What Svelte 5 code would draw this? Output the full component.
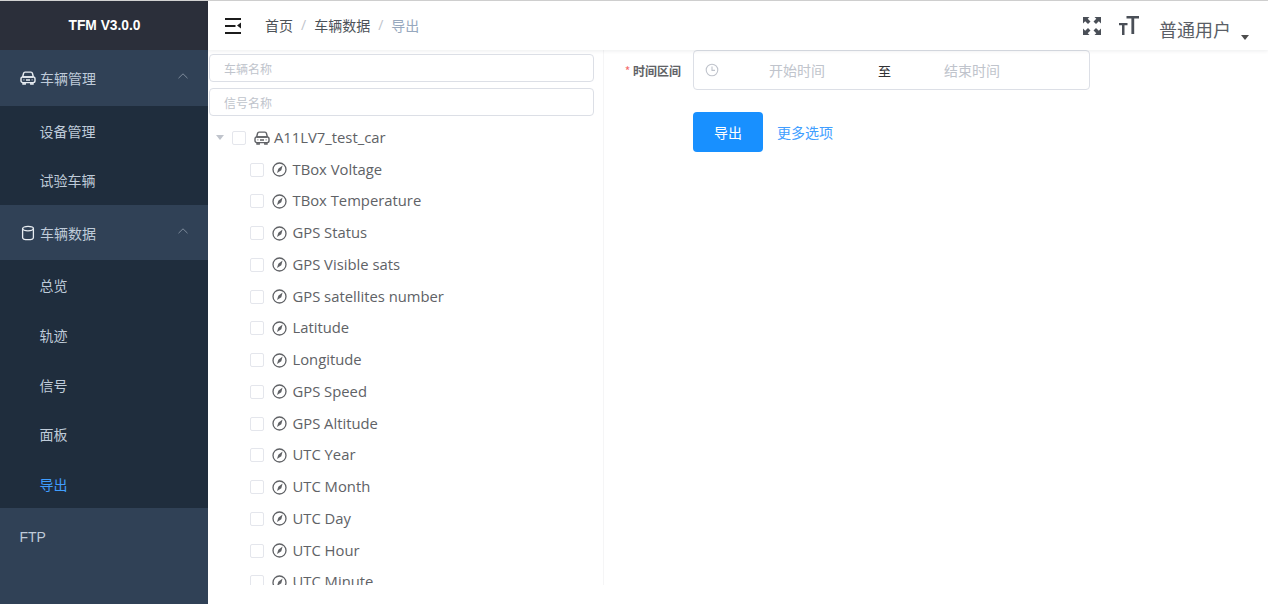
<script>
  const signals = [
    'TBox Voltage', 'TBox Temperature', 'GPS Status', 'GPS Visible sats', 'GPS satellites number',
    'Latitude', 'Longitude', 'GPS Speed', 'GPS Altitude', 'UTC Year', 'UTC Month', 'UTC Day', 'UTC Hour', 'UTC Minute'
  ];
  const menu = [
    { title: '车辆管理', icon: 'car', items: ['设备管理', '试验车辆'] },
    { title: '车辆数据', icon: 'db', items: ['总览', '轨迹', '信号', '面板', '导出'] }
  ];
</script>

{#snippet car(size)}
  <svg class="car" width={size} height={size} viewBox="0 0 16 16" fill="none" stroke="currentColor" stroke-width="1.4">
    <path d="M2.600 7 3.600 3.200C3.800 2.500 4.300 2.100 5 2.100h6c.7 0 1.200.4 1.400 1.100L13.400 7" />
    <rect x="1" y="7" width="14" height="5.600" rx="1.800" />
    <path d="M3 12.600v1.400h2.200v-1.400M10.800 12.600v1.400H13v-1.400M6 10h4M3 7h10" />
    <circle cx="3.900" cy="9.800" r=".6" fill="currentColor" stroke="none" />
    <circle cx="12.100" cy="9.800" r=".6" fill="currentColor" stroke="none" />
  </svg>
{/snippet}

{#snippet gauge()}
  <svg class="gauge" width="15" height="15" viewBox="0 0 15 15" fill="none" stroke="currentColor">
    <circle cx="7.500" cy="7.500" r="6.500" stroke-width="1.300" />
    <path d="M5 11 6.300 6.800 10.600 3.400 9.300 8.300z" fill="currentColor" stroke="none" />
  </svg>
{/snippet}

<div class="layout">
  <aside class="sidebar">
    <div class="logo">TFM V3.0.0</div>
    {#each menu as group}
      <div class="group-title">
        {#if group.icon === 'car'}
          {@render car(16)}
        {:else}
          <svg width="16" height="16" viewBox="0 0 16 16" fill="none" stroke="currentColor" stroke-width="1.3">
            <ellipse cx="8" cy="3.600" rx="5.400" ry="2.200" />
            <path d="M2.600 3.600v8.800c0 1.200 2.400 2.200 5.400 2.200s5.400-1 5.400-2.200V3.600" />
          </svg>
        {/if}
        <span>{group.title}</span>
        <svg class="arrow" width="10" height="6" viewBox="0 0 10 6" fill="none" stroke="currentColor"><path d="M.5 5.200 5 .8l4.500 4.400" /></svg>
      </div>
      {#each group.items as item}
        <div class="sub" class:active={item === '导出'}>{item}</div>
      {/each}
    {/each}
    <div class="ftp">FTP</div>
  </aside>

  <div class="main">
    <header class="navbar">
      <svg class="hamburger" width="16" height="16" viewBox="0 0 16 16" fill="#1c1c1c">
        <rect width="16" height="2" y="0" /><rect width="10.500" height="2" y="7" /><rect width="16" height="2" y="14" />
        <path d="M16 4.500v6l-4-3z" />
      </svg>
      <nav class="crumbs">
        <span>首页</span><i>/</i><span>车辆数据</span><i>/</i><span class="current">导出</span>
      </nav>
      <div class="right">
        <svg class="full" width="18" height="18" viewBox="0 0 18 18" fill="#4a4f57">
          <path d="M0 0h6.500L4.700 1.800 7.500 4.600 5 7.100 2.200 4.300 0 6.500zM18 0h-6.500l1.800 1.800-2.800 2.800L13 7.100l2.800-2.800L18 6.500zM0 18h6.500l-1.800-1.800 2.800-2.800L5 10.900l-2.800 2.800L0 11.500zM18 18h-6.500l1.800-1.800-2.800-2.800 2.500-2.500 2.800 2.800 2.200-2.200z" />
        </svg>
        <svg class="size" width="20" height="19" viewBox="0 0 20 19" fill="#4a4f57">
          <path d="M0 7h8.500v2.200h-3V19H3V9.200H0zM7.500 0H20v2.600h-4.800V18h-2.800V2.600H7.500z" />
        </svg>
        <span class="user">普通用户</span>
        <i class="caret"></i>
      </div>
    </header>

    <div class="content">
      <section class="tree-pane">
        <input class="search" placeholder="车辆名称" />
        <input class="search" placeholder="信号名称" />
        <div class="root row">
          <i class="tri"></i>
          <i class="check"></i>
          {@render car(16)}
          <span>A11LV7_test_car</span>
        </div>
        {#each signals as signal}
          <div class="leaf row">
            <i class="check"></i>
            {@render gauge()}
            <span>{signal}</span>
          </div>
        {/each}
      </section>

      <section class="form">
        <div class="field">
          <label for="range"><b>*</b> 时间区间</label>
          <div class="range" id="range">
            <svg width="14" height="14" viewBox="0 0 14 14" fill="none" stroke="#c0c4cc" stroke-width="1.100">
              <circle cx="7" cy="7" r="5.800" /><path d="M7 3.400V7.400h3" />
            </svg>
            <span class="ph start">开始时间</span>
            <span class="to">至</span>
            <span class="ph end">结束时间</span>
          </div>
        </div>
        <div class="actions">
          <button class="primary">导出</button>
          <button class="link">更多选项</button>
        </div>
      </section>
    </div>
  </div>
</div>

<style>
  :global(body) {
    margin: 0;
    background: #fff;
    overflow: hidden;
  }

  .layout {
    display: flex;
    height: 604px;
    box-sizing: border-box;
    border-top: 1px solid #d2d2d2;
    font-family: "Open Sans", "Noto Sans CJK SC", sans-serif;
  }

  .sidebar {
    width: 208px;
    flex: none;
    background: #304156;
    color: #bfcbd9;
    font-size: 14px;
  }

  .logo {
    height: 49px;
    display: flex;
    align-items: center;
    justify-content: center;
    background: #2b2f3a;
    color: #fff;
    font: bold 13.800px "Liberation Sans", sans-serif;
    padding-left: 1px;
    box-sizing: border-box;
  }

  .group-title {
    height: 55.600px;
    display: flex;
    align-items: center;
    gap: 4px;
    padding: 0 20px;
    position: relative;
    font-size: 14px;
  }

  .group-title svg {
    color: #e8edf2;
    flex: none;
  }

  .group-title .arrow {
    position: absolute;
    right: 20px;
    top: 23px;
    color: #7f8c9c;
  }

  .sub {
    height: 49.600px;
    line-height: 51px;
    padding-left: 39.500px;
    background: #1f2d3d;
  }

  .sub.active {
    color: #409eff;
  }

  .ftp {
    padding: 21px 19.500px 0;
    font: 14px "Liberation Sans", sans-serif;
  }

  .main {
    flex: 1;
    min-width: 0;
    display: flex;
    flex-direction: column;
  }

  .navbar {
    height: 49px;
    flex: none;
    display: flex;
    align-items: center;
    padding-left: 17px;
    box-shadow: 0 1px 4px rgba(0, 21, 41, 0.08);
    position: relative;
    color: #5a5e66;
  }

  .hamburger {
    margin-top: 1px;
  }

  .crumbs {
    margin-left: 24px;
    font-size: 14px;
    color: #4d5258;
    display: flex;
    margin-top: -1px;
  }

  .crumbs i {
    font-style: normal;
    color: #c0c4cc;
    margin: 0 8px;
  }

  .crumbs .current {
    color: #97a8be;
  }

  .right {
    margin-left: auto;
    display: flex;
    align-items: center;
  }

  .full {
    margin-top: 1px;
  }

  .size {
    margin-left: 18px;
    margin-top: -1px;
  }

  .user {
    margin-left: 20px;
    font-size: 18px;
    color: #5a5e66;
    margin-top: 6px;
  }

  .caret {
    width: 0;
    height: 0;
    border: 4px solid transparent;
    border-top: 5px solid #4d4d4d;
    border-bottom: 0;
    margin: 24px 19px 0 10px;
  }

  .content {
    flex: 1;
    min-height: 0;
    display: flex;
    align-items: flex-start;
  }

  .tree-pane {
    width: 396px;
    height: 535px;
    box-sizing: border-box;
    overflow: hidden;
    flex: none;
    border-right: 1px solid #f5f5f6;
    padding-top: 4px;
  }

  .search {
    display: block;
    box-sizing: border-box;
    width: 385px;
    height: 28px;
    margin-bottom: 6px;
    margin-left: 1px;
    padding: 0 14px;
    border: 1px solid #dcdfe6;
    border-radius: 4px;
    font: 12px "Noto Sans CJK SC", sans-serif;
    outline: none;
  }

  .search::placeholder {
    color: #c0c4cc;
  }

  .row {
    height: 31.750px;
    display: flex;
    align-items: center;
    color: #606266;
    font-size: 14.800px;
  }

  .row span {
    margin-top: -2px;
  }

  .root {
    padding-left: 8px;
    margin-top: 2px;
  }

  .tri {
    width: 0;
    height: 0;
    border: 4px solid transparent;
    border-top: 5px solid #c0c4cc;
    border-bottom: 0;
    margin-right: 8px;
  }

  .check {
    width: 14px;
    height: 14px;
    box-sizing: border-box;
    border: 1px solid #e4e6ec;
    border-radius: 2px;
    flex: none;
  }

  .root .check {
    margin-right: 8px;
  }

  .root .car {
    margin-right: 4px;
    color: #606266;
  }

  .leaf {
    padding-left: 41.500px;
  }

  .leaf .check {
    margin-right: 8px;
  }

  .gauge {
    margin-right: 6px;
    flex: none;
  }

  .form {
    flex: 1;
  }

  .field {
    display: flex;
    align-items: center;
    height: 40px;
  }

  .field label {
    width: 89px;
    box-sizing: border-box;
    padding-right: 12px;
    text-align: right;
    font-size: 12px;
    font-weight: 700;
    color: #606266;
    font-family: "Noto Sans CJK SC", sans-serif;
  }

  .field label b {
    color: #f56c6c;
    font-weight: 400;
  }

  .range {
    width: 397px;
    height: 40px;
    box-sizing: border-box;
    border: 1px solid #dcdfe6;
    border-radius: 4px;
    display: flex;
    align-items: center;
    padding-left: 11px;
    font-size: 14px;
  }

  .ph {
    color: #c0c4cc;
  }

  .start {
    margin-left: 50px;
  }

  .to {
    margin-left: 53px;
    color: #303133;
    font-size: 13px;
  }

  .end {
    margin-left: 53px;
  }

  .actions {
    display: flex;
    align-items: center;
    margin: 22px 0 0 89px;
  }

  button {
    font-family: "Noto Sans CJK SC", sans-serif;
    font-size: 14px;
    border: 0;
    cursor: pointer;
  }

  .primary {
    width: 70px;
    height: 40px;
    background: #1890ff;
    color: #fff;
    border-radius: 4px;
  }

  .link {
    margin-left: 14px;
    padding: 0;
    background: none;
    color: #409eff;
  }
</style>
